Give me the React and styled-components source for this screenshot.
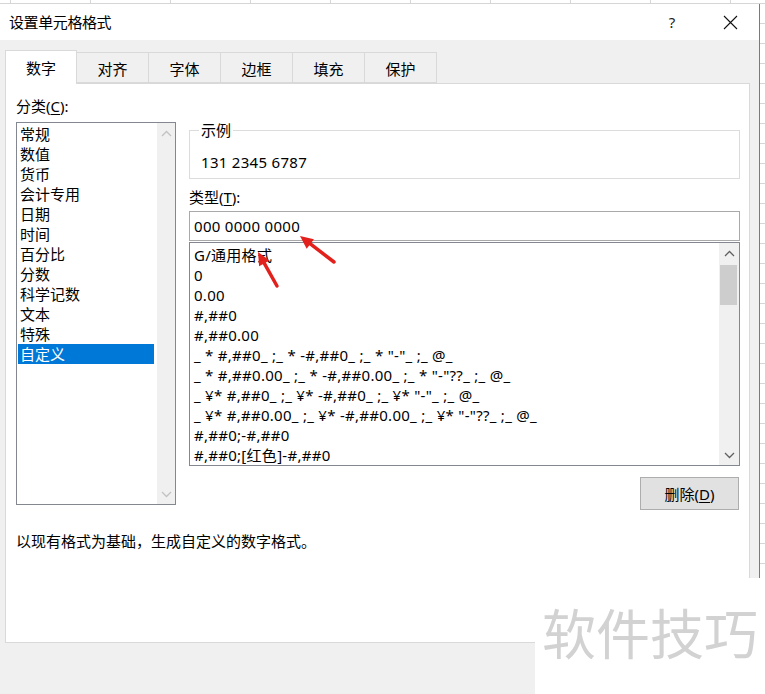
import React from 'react'
import styled, { createGlobalStyle } from 'styled-components'

const GlobalStyle = createGlobalStyle`
	html, body {
		margin: 0;
		padding: 0;
		background: #fff;
	}
	body {
		font-family: "Noto Sans", "Noto Sans CJK SC", sans-serif;
		font-size: 15px;
		color: #000;
	}
`

const Page = styled.div`
	position: relative;
	width: 765px;
	height: 694px;
	overflow: hidden;
	background-color: #fff;
	background-image:
		linear-gradient(#d6d6d6 1px, transparent 1px),
		linear-gradient(90deg, #d6d6d6 1px, transparent 1px);
	background-size: 80px 20px;
	background-position: 10px 3px;
`

const Dialog = styled.div`
	margin-top: 4px;
	width: 759px;
	height: 690px;
	background: #f0f0f0;
	border-right: 1px solid #7a7a7a;
	display: flex;
	flex-direction: column;
`

const TitleBar = styled.div`
	height: 36px;
	background: #fff;
	display: flex;
	align-items: center;
	padding-left: 9px;
`

const Title = styled.div`
	flex: 1;
	font-size: 15px;
	line-height: 20px;
	letter-spacing: -0.4px;
`

const TitleButton = styled.div`
	width: 58px;
	height: 36px;
	display: flex;
	align-items: center;
	justify-content: center;
	font-size: 15px;
	color: #222;
`

const Body = styled.div`
	padding: 10px 9px 0 5px;
`

const TabRow = styled.div`
	display: flex;
	align-items: flex-end;
	height: 33px;
	position: relative;
	z-index: 1;
`

const Tab = styled.div`
	width: ${p => (p.$active ? 72 : 73)}px;
	height: ${p => (p.$active ? 34 : 31)}px;
	margin-left: ${p => (p.$first ? 0 : -1)}px;
	margin-bottom: ${p => (p.$active ? -1 : 0)}px;
	box-sizing: border-box;
	border: 1px solid #d9d9d9;
	border-bottom: ${p => (p.$active ? 'none' : '1px solid #d9d9d9')};
	background: ${p => (p.$active ? '#fff' : '#f0f0f0')};
	display: flex;
	align-items: center;
	justify-content: center;
	padding-top: ${p => (p.$active ? 0 : 1)}px;
	font-size: 15px;
`

const Panel = styled.div`
	width: 745px;
	height: 560px;
	box-sizing: border-box;
	background: #fff;
	border: 1px solid #d9d9d9;
	padding: 12px 9px 0 10px;
`

const Columns = styled.div`
	display: flex;
	gap: 13px;
`

const LeftCol = styled.div`
	width: 160px;
	display: flex;
	flex-direction: column;
`

const RightCol = styled.div`
	width: 551px;
	display: flex;
	flex-direction: column;
`

const Label = styled.div`
	line-height: 20px;
	margin: ${p => p.$margin || 0};
`

const Key = styled.span`
	text-decoration: underline;
	text-underline-offset: 2px;
`

const ListBox = styled.div`
	position: relative;
	height: ${p => p.$height}px;
	box-sizing: border-box;
	border: 1px solid #828790;
	background: #fff;
	padding: ${p => p.$pad};
	overflow: hidden;
`

const Item = styled.div`
	height: 20px;
	line-height: 20px;
	padding-left: 2px;
	margin-right: ${p => p.$gutter}px;
	white-space: pre;
	letter-spacing: ${p => (p.$wide ? '0.28px' : '0')};
	background: ${p => (p.$selected ? '#0078d7' : 'transparent')};
	color: ${p => (p.$selected ? '#fff' : '#000')};
`

const ScrollBar = styled.div`
	position: absolute;
	top: 0;
	right: 0;
	bottom: 0;
	width: ${p => p.$width}px;
	background: #f0f0f0;
	display: flex;
	flex-direction: column;
	align-items: center;
	justify-content: space-between;
`

const ArrowCell = styled.div`
	height: 20px;
	width: 100%;
	display: flex;
	align-items: center;
	justify-content: center;
`

const Thumb = styled.div`
	position: absolute;
	left: 1px;
	right: 2px;
	top: 22px;
	height: 40px;
	background: #cdcdcd;
`

const Group = styled.fieldset`
	margin: 24px 0 0;
	padding: 0 0 6px 9px;
	border: 1px solid #dcdcdc;
	min-width: 0;
`

const Legend = styled.legend`
	padding: 0 2px;
	line-height: 20px;
	font-size: 15px;
`

const Sample = styled.div`
	line-height: 20px;
	margin-top: 12px;
	padding-left: 2px;
	letter-spacing: 0.3px;
`

const TypeInput = styled.div`
	height: 30px;
	box-sizing: border-box;
	border: 1px solid #a9a9a9;
	padding-left: 4px;
	display: flex;
	align-items: center;
	margin-bottom: 1px;
	letter-spacing: 0.3px;
`

const ButtonRow = styled.div`
	display: flex;
	justify-content: flex-end;
	padding-right: 1px;
	margin-top: 11px;
`

const Button = styled.div`
	width: 99px;
	height: 33px;
	box-sizing: border-box;
	background: #e1e1e1;
	border: 1px solid #adadad;
	display: flex;
	align-items: center;
	justify-content: center;
`

const Description = styled.div`
	margin-top: 21px;
	line-height: 20px;
`

const Overlay = styled.svg`
	position: absolute;
	left: 0;
	top: 0;
	pointer-events: none;
`

const Watermark = styled.div`
	position: absolute;
	left: 535px;
	top: 578px;
	width: 230px;
	height: 116px;
	background: #fff;
	box-sizing: border-box;
	padding: 16px 0 0 7px;
	font-family: "Noto Sans CJK SC", sans-serif;
	font-size: 54px;
	line-height: 76px;
	color: #d2d2d2;
	white-space: nowrap;
`

const categories = ['常规', '数值', '货币', '会计专用', '日期', '时间', '百分比', '分数', '科学记数', '文本', '特殊', '自定义']

const formats = [
	'G/通用格式',
	'0',
	'0.00',
	'#,##0',
	'#,##0.00',
	'_ * #,##0_ ;_ * -#,##0_ ;_ * "-"_ ;_ @_',
	'_ * #,##0.00_ ;_ * -#,##0.00_ ;_ * "-"??_ ;_ @_',
	'_ ¥* #,##0_ ;_ ¥* -#,##0_ ;_ ¥* "-"_ ;_ @_',
	'_ ¥* #,##0.00_ ;_ ¥* -#,##0.00_ ;_ ¥* "-"??_ ;_ @_',
	'#,##0;-#,##0',
	'#,##0;[红色]-#,##0',
]

const tabs = ['数字', '对齐', '字体', '边框', '填充', '保护']

function Chevron({ up, color }) {
	return (
		<svg width="11" height="7" viewBox="0 0 11 7">
			<polyline
				points={up ? '1,6 5.5,1.5 10,6' : '1,1 5.5,5.5 10,1'}
				fill="none"
				stroke={color}
				strokeWidth="1.3"
			/>
		</svg>
	)
}

function RedArrow({ x1, y1, x2, y2 }) {
	// tail (x1,y1) -> tip (x2,y2)
	const dx = x2 - x1
	const dy = y2 - y1
	const len = Math.hypot(dx, dy)
	const ux = dx / len
	const uy = dy / len
	const hl = 13
	const hw = 6
	const bx = x2 - ux * hl
	const by = y2 - uy * hl
	const p1 = `${bx - uy * hw},${by + ux * hw}`
	const p2 = `${bx + uy * hw},${by - ux * hw}`
	return (
		<g>
			<line x1={x1} y1={y1} x2={bx + ux * 2} y2={by + uy * 2} stroke="#e3211c" strokeWidth="3.5" strokeLinecap="round" />
			<polygon points={`${x2},${y2} ${p1} ${p2}`} fill="#e3211c" />
		</g>
	)
}

export default function App() {
	return (
		<Page>
			<GlobalStyle />
			<Dialog>
				<TitleBar>
					<Title>设置单元格格式</Title>
					<TitleButton>?</TitleButton>
					<TitleButton>
						<svg width="15" height="15" viewBox="0 0 15 15">
							<path d="M1 1 L14 14 M14 1 L1 14" stroke="#111" strokeWidth="1.1" />
						</svg>
					</TitleButton>
				</TitleBar>
				<Body>
					<TabRow>
						{tabs.map((t, i) => (
							<Tab key={t} $active={i === 0} $first={i === 0}>{t}</Tab>
						))}
					</TabRow>
					<Panel>
						<Columns>
							<LeftCol>
								<Label $margin="0 0 6px">分类(<Key>C</Key>):</Label>
								<ListBox $height={383} $pad="1px 1px">
									{categories.map((c) => (
										<Item key={c} $gutter={20} $selected={c === '自定义'}>{c}</Item>
									))}
									<ScrollBar $width={18}>
										<ArrowCell><Chevron up color="#c2c2c2" /></ArrowCell>
										<ArrowCell><Chevron color="#c2c2c2" /></ArrowCell>
									</ScrollBar>
								</ListBox>
							</LeftCol>
							<RightCol>
								<Group>
									<Legend>示例</Legend>
									<Sample>131 2345 6787</Sample>
								</Group>
								<Label $margin="8px 0 4px">类型(<Key>T</Key>):</Label>
								<TypeInput>000 0000 0000</TypeInput>
								<ListBox $height={224} $pad="2px 0 0 2px">
									{formats.map((f) => (
										<Item key={f} $gutter={20} $wide>{f}</Item>
									))}
									<ScrollBar $width={20}>
										<ArrowCell><Chevron up color="#606060" /></ArrowCell>
										<Thumb />
										<ArrowCell><Chevron color="#606060" /></ArrowCell>
									</ScrollBar>
								</ListBox>
								<ButtonRow>
									<Button>删除(<Key>D</Key>)</Button>
								</ButtonRow>
							</RightCol>
						</Columns>
						<Description>以现有格式为基础，生成自定义的数字格式。</Description>
					</Panel>
				</Body>
			</Dialog>
			<Overlay width="765" height="694" viewBox="0 0 765 694">
				<RedArrow x1={334} y1={262} x2={300} y2={236} />
				<RedArrow x1={277} y1={286} x2={258} y2={252} />
			</Overlay>
			<Watermark>软件技巧</Watermark>
		</Page>
	)
}
